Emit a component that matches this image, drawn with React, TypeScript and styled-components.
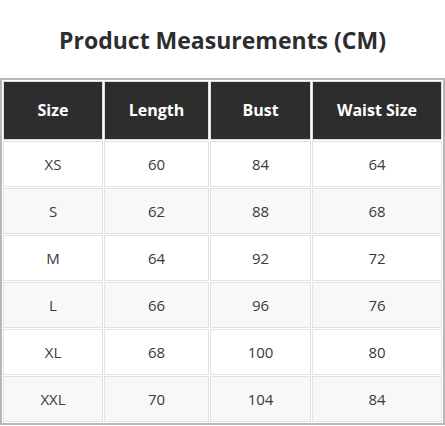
import React from "react";
import styled, { createGlobalStyle } from "styled-components";

const Global = createGlobalStyle`
  html, body { margin: 0; padding: 0; background: #ffffff; }
  body { font-family: "Open Sans", "Noto Sans", sans-serif; }
`;

const Page = styled.div`
  display: flex;
  flex-direction: column;
  align-items: stretch;
  padding-top: 25px;
`;

const Title = styled.h2`
  margin: 0 0 22px;
  text-align: center;
  font-size: 23px;
  line-height: 31px;
  font-weight: 700;
  color: #2d2d2d;
`;

const Table = styled.table`
  width: 445px;
  border: 2px solid #b7b7b7;
  border-collapse: separate;
  border-spacing: 1px;
  table-layout: fixed;
  box-sizing: border-box;
`;

const HeadCell = styled.th<{ $w: number }>`
  width: ${(p) => p.$w}px;
  height: 59px;
  box-sizing: border-box;
  padding: 0 0 2px;
  background: #2d2d2d;
  color: #ffffff;
  border: 1px solid #dcdcdc;
  font-size: 16px;
  font-weight: 700;
  text-align: center;
`;

const Row = styled.tr<{ $alt: boolean }>`
  background: ${(p) => (p.$alt ? "#f8f8f8" : "#ffffff")};
`;

const Cell = styled.td`
  height: 46px;
  box-sizing: border-box;
  padding: 0;
  border: 1px solid #e2e2e2;
  text-align: center;
  font-size: 15px;
  color: #3a3a3a;
`;

const cols = [
  { label: "Size", w: 100 },
  { label: "Length", w: 105 },
  { label: "Bust", w: 101 },
  { label: "Waist Size", w: 130 },
];

const rows = [
  ["XS", "60", "84", "64"],
  ["S", "62", "88", "68"],
  ["M", "64", "92", "72"],
  ["L", "66", "96", "76"],
  ["XL", "68", "100", "80"],
  ["XXL", "70", "104", "84"],
];

export default function App() {
  return (
    <>
      <Global />
      <Page>
        <Title>Product Measurements (CM)</Title>
        <Table>
          <thead>
            <tr>
              {cols.map((c) => (
                <HeadCell key={c.label} $w={c.w}>
                  {c.label}
                </HeadCell>
              ))}
            </tr>
          </thead>
          <tbody>
            {rows.map((r, i) => (
              <Row key={r[0]} $alt={i % 2 === 1}>
                {r.map((v, j) => (
                  <Cell key={j}>{v}</Cell>
                ))}
              </Row>
            ))}
          </tbody>
        </Table>
      </Page>
    </>
  );
}
